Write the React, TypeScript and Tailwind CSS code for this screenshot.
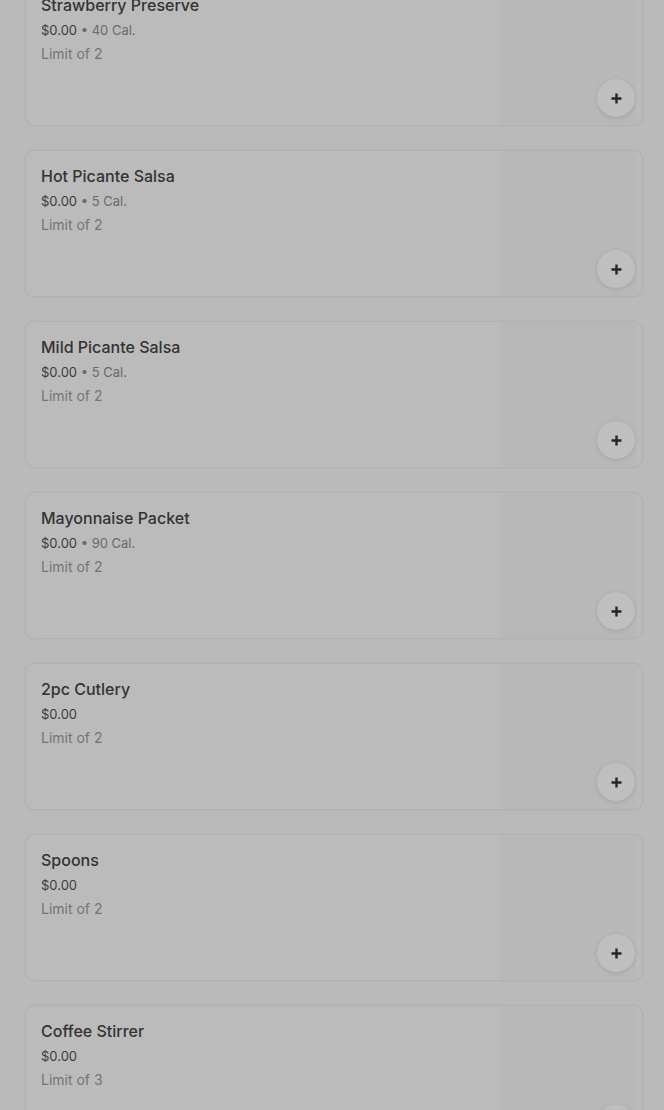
import React from "react";

type Item = { name: string; cal?: string; limit: number };

const items: Item[] = [
  { name: "Strawberry Preserve", cal: "40 Cal.", limit: 2 },
  { name: "Hot Picante Salsa", cal: "5 Cal.", limit: 2 },
  { name: "Mild Picante Salsa", cal: "5 Cal.", limit: 2 },
  { name: "Mayonnaise Packet", cal: "90 Cal.", limit: 2 },
  { name: "2pc Cutlery", limit: 2 },
  { name: "Spoons", limit: 2 },
  { name: "Coffee Stirrer", limit: 3 },
];

function Card({ item }: { item: Item }) {
  return (
    <div className="relative flex h-[147px] w-[618px] shrink-0 overflow-hidden rounded-[10px] border border-[#b1b1b1] bg-[#bbbbbb] shadow-[0_0_2px_rgba(0,0,0,0.06)]">
      <div className="flex flex-1 flex-col pl-[15px] pr-4 pt-[13px]">
        <div className="text-[16px] font-medium leading-[24px] text-[#333333]">{item.name}</div>
        <div className="mt-[1px] text-[13px] leading-[24px]">
          <span className="text-[#3c3c3c]">$0.00</span>
          {item.cal && <span className="text-[#6a6a6a]"> • {item.cal}</span>}
        </div>
        <div className="text-[14px] leading-[24px] text-[#747474]">Limit of {item.limit}</div>
      </div>
      <div className="w-[136px] shrink-0 bg-[#b8b8b8]" />
      <div className="w-[6px] shrink-0" />
      <button className="absolute bottom-[8px] right-[7px] flex h-[38px] w-[38px] items-center justify-center rounded-full bg-[#bfbfbf] shadow-[0_1px_4px_rgba(0,0,0,0.12)]">
        <svg width="13" height="13" viewBox="0 0 13 13">
          <path d="M6.5 1.5v10M1.5 6.5h10" stroke="#262626" strokeWidth="2.4" />
        </svg>
      </button>
    </div>
  );
}

export default function App() {
  return (
    <div
      className="h-[1110px] w-[664px] overflow-hidden bg-[#bababa]"
      style={{ fontFamily: "Inter, 'Noto Sans', sans-serif" }}
    >
      <div className="-mt-[21px] flex flex-col gap-[24px] pl-[25px]">
        {items.map((it) => (
          <Card key={it.name} item={it} />
        ))}
      </div>
    </div>
  );
}
